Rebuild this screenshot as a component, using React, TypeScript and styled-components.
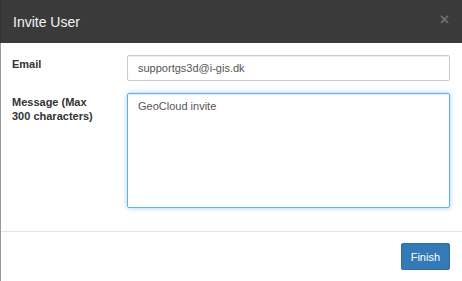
import React from "react";
import styled, { createGlobalStyle } from "styled-components";

const Global = createGlobalStyle`
  html, body { margin: 0; padding: 0; background: #fff; }
  body { font-family: "Liberation Sans", Arial, sans-serif; }
  * { box-sizing: border-box; }
`;

const Modal = styled.div`
  width: 462px;
  height: 281px;
  display: flex;
  flex-direction: column;
  background: #fff;
  overflow: hidden;
`;

const Header = styled.div`
  height: 43px;
  flex: none;
  display: flex;
  align-items: center;
  justify-content: space-between;
  padding: 0 13px 0 12px;
  background: #3a3a3a;
  border-left: 1px solid #333;
`;

const Title = styled.h4`
  margin: 0;
  font-size: 14px;
  font-weight: normal;
  color: #f4f4f4;
  line-height: 20px;
`;

const Close = styled.span`
  font-size: 16px;
  font-weight: bold;
  line-height: 1;
  color: #6e6e6e;
  margin-top: -3px;
`;

const Content = styled.div`
  flex: 1;
  display: flex;
  flex-direction: column;
  border-left: 1px solid #9a9a9a;
`;

const Body = styled.div`
  display: grid;
  grid-template-columns: 115px 1fr;
  row-gap: 12px;
  padding: 12px 12px 23px 11px;
  border-bottom: 1px solid #e5e5e5;
`;

const Label = styled.label`
  font-size: 11px;
  font-weight: bold;
  color: #333;
  line-height: 14px;
  padding-top: 2px;
`;

const Input = styled.input`
  height: 26px;
  width: 100%;
  margin: 0;
  padding: 0 10px;
  border: 1px solid #ccc;
  border-radius: 2px;
  font-family: "Liberation Sans", Arial, sans-serif;
  font-size: 11px;
  color: #555;
  background: #fff;
  outline: none;
  box-shadow: inset 0 1px 1px rgba(0, 0, 0, 0.075);
`;

const TextArea = styled.textarea`
  height: 115px;
  width: 100%;
  margin: 0;
  padding: 5px 10px;
  border: 1px solid #66afe9;
  border-radius: 2px;
  font-family: "Liberation Sans", Arial, sans-serif;
  font-size: 11px;
  line-height: 15px;
  color: #555;
  resize: none;
  outline: none;
  display: block;
  box-shadow: inset 0 1px 1px rgba(0, 0, 0, 0.075), 0 0 5px rgba(102, 175, 233, 0.6);
`;

const Footer = styled.div`
  display: flex;
  justify-content: flex-end;
  padding: 11px 12px 0 11px;
`;

const Button = styled.button`
  height: 27px;
  padding: 0 9px;
  border: 1px solid #2e6da4;
  border-radius: 2px;
  background: #337ab7;
  color: #fff;
  font-family: "Liberation Sans", Arial, sans-serif;
  font-size: 11px;
  cursor: pointer;
`;

export default function App() {
  return (
    <>
      <Global />
      <Modal>
        <Header>
          <Title>Invite User</Title>
          <Close>×</Close>
        </Header>
        <Content>
          <Body>
            <Label>Email</Label>
            <Input readOnly defaultValue="supportgs3d@i-gis.dk" />
            <Label>
              Message (Max
              <br />
              300 characters)
            </Label>
            <TextArea readOnly defaultValue="GeoCloud invite" />
          </Body>
          <Footer>
            <Button>Finish</Button>
          </Footer>
        </Content>
      </Modal>
    </>
  );
}
